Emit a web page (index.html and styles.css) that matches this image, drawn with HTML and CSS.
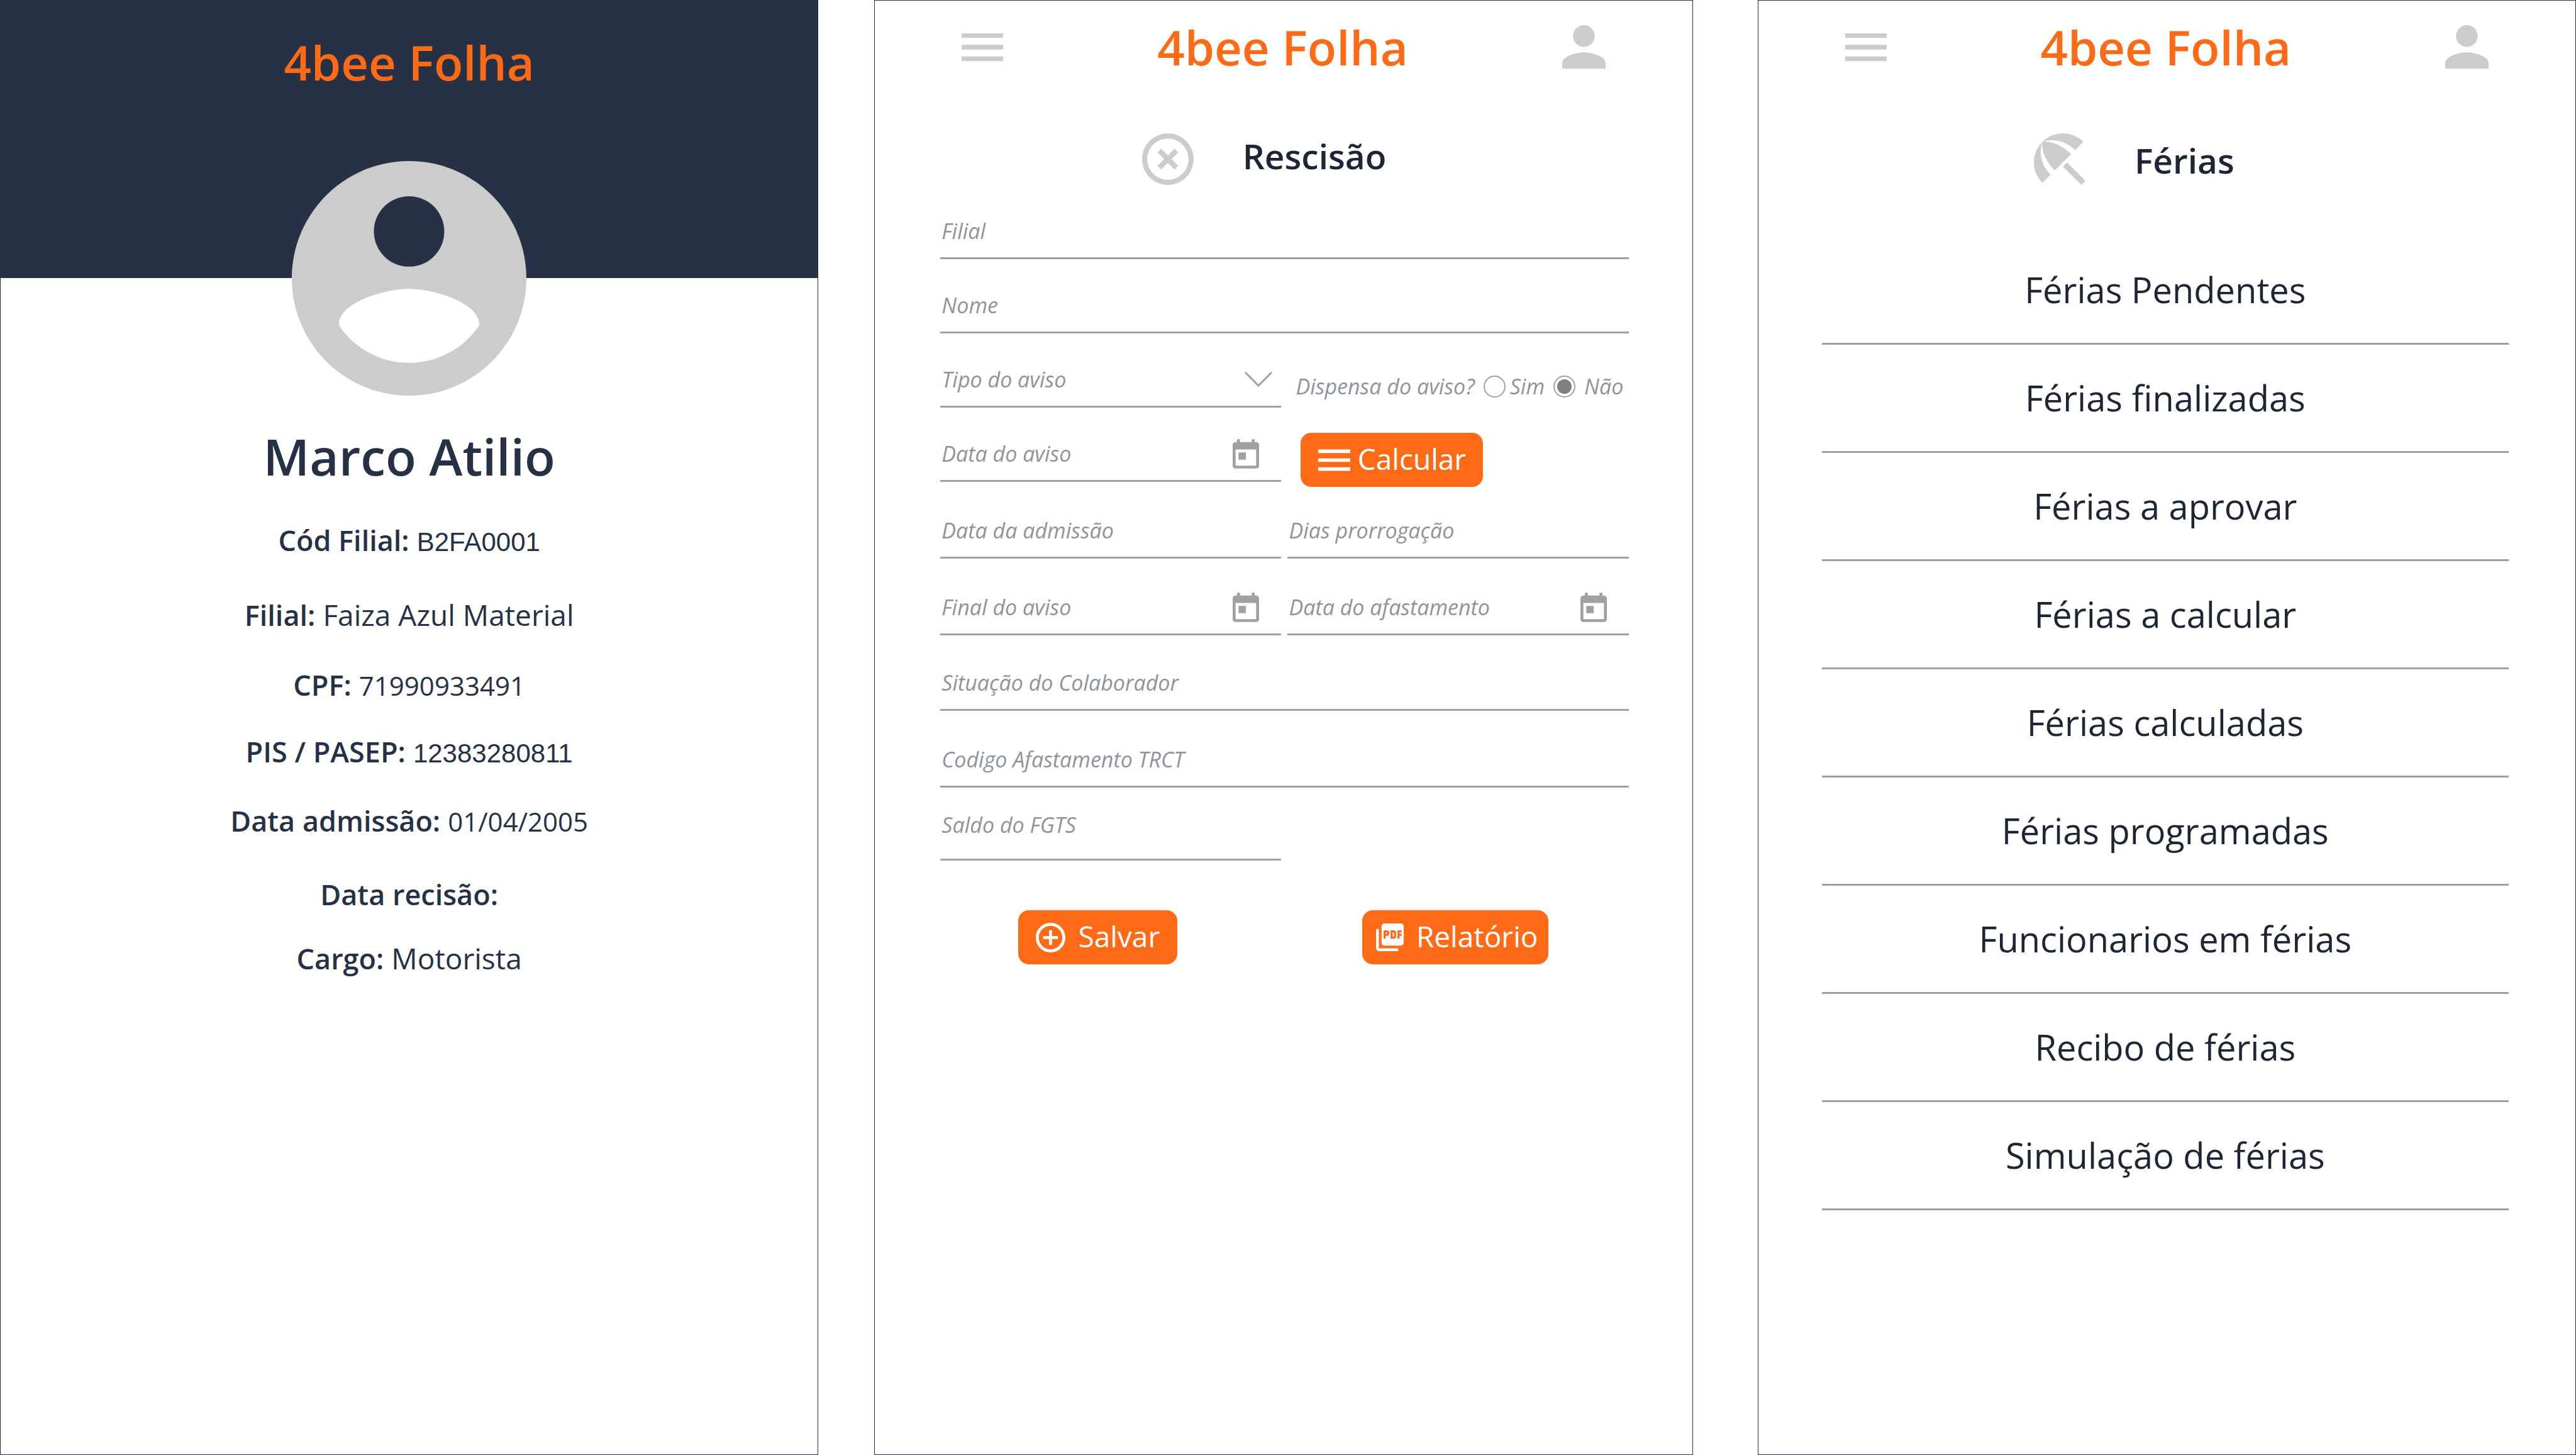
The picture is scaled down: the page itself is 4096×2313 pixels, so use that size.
FILE: index.html
```html
<!DOCTYPE html>
<html lang="pt-BR">
<head>
<meta charset="utf-8">
<meta name="viewport" content="width=device-width, initial-scale=1">
<title>4bee Folha</title>
<link rel="stylesheet" href="styles.css">
</head>
<body>
<svg class="sprite" aria-hidden="true">
  <symbol id="i-menu" viewBox="3 6 18 12"><path d="M3 18h18v-2H3v2zm0-5h18v-2H3v2zm0-7v2h18V6H3z"/></symbol>
  <symbol id="i-person" viewBox="4 4 16 16"><path d="M12 12c2.21 0 4-1.79 4-4s-1.79-4-4-4-4 1.79-4 4 1.79 4 4 4zm0 2c-2.67 0-8 1.34-8 4v2h16v-2c0-2.66-5.33-4-8-4z"/></symbol>
  <symbol id="i-today" viewBox="3 1 18 20"><path d="M19 3h-1V1h-2v2H8V1H6v2H5c-1.11 0-1.99.9-1.99 2L3 19c0 1.1.89 2 2 2h14c1.1 0 2-.9 2-2V5c0-1.1-.9-2-2-2zm0 16H5V8h14v11zM7 10h5v5H7z"/></symbol>
</svg>

<main class="screens">
  <section class="screen profile">
    <header class="profile-banner"><h1 class="brand">4bee Folha</h1></header>
    <svg class="avatar" viewBox="2 2 20 20" aria-hidden="true"><path d="M12 2C6.48 2 2 6.48 2 12s4.48 10 10 10 10-4.48 10-10S17.52 2 12 2zm0 3c1.66 0 3 1.34 3 3s-1.34 3-3 3-3-1.34-3-3 1.34-3 3-3zm0 14.2c-2.5 0-4.71-1.28-6-3.22.03-1.99 4-3.08 6-3.08 1.99 0 5.97 1.09 6 3.08-1.29 1.94-3.5 3.22-6 3.22z"/></svg>
    <h2 class="person-name">Marco Atilio</h2>
    <dl class="details">
      <div class="detail"><dt>Cód Filial:</dt><dd class="plain">B2FA0001</dd></div>
      <div class="detail"><dt>Filial:</dt><dd>Faiza Azul Material</dd></div>
      <div class="detail"><dt>CPF:</dt><dd class="number">71990933491</dd></div>
      <div class="detail"><dt>PIS / PASEP:</dt><dd class="plain">12383280811</dd></div>
      <div class="detail"><dt>Data admissão:</dt><dd class="number">01/04/2005</dd></div>
      <div class="detail"><dt>Data recisão:</dt></div>
      <div class="detail"><dt>Cargo:</dt><dd>Motorista</dd></div>
    </dl>
  </section>

  <section class="screen termination">
    <header class="topbar">
      <button class="icon-button" type="button" aria-label="Menu"><svg class="icon-menu"><use href="#i-menu"/></svg></button>
      <h1 class="brand">4bee Folha</h1>
      <button class="icon-button" type="button" aria-label="Perfil"><svg class="icon-person"><use href="#i-person"/></svg></button>
    </header>
    <div class="heading heading-termination">
      <svg class="heading-icon" viewBox="2 2 20 20" aria-hidden="true"><path d="M14.59 8L12 10.59 9.41 8 8 9.41 10.59 12 8 14.59 9.41 16 12 13.41 14.59 16 16 14.59 13.41 12 16 9.41 14.59 8zM12 2C6.47 2 2 6.47 2 12s4.47 10 10 10 10-4.47 10-10S17.53 2 12 2zm0 18c-4.41 0-8-3.59-8-8s3.59-8 8-8 8 3.59 8 8-3.59 8-8 8z"/></svg>
      <h2>Rescisão</h2>
    </div>
    <form class="form">
      <div class="fields">
        <div class="field wide"><input type="text" placeholder="Filial" aria-label="Filial"></div>
        <div class="field wide"><input type="text" placeholder="Nome" aria-label="Nome"></div>
        <div class="field">
          <select aria-label="Tipo do aviso"><option>Tipo do aviso</option></select>
          <svg class="chevron" viewBox="0 0 44 24" aria-hidden="true"><path d="M1 1l21 21L43 1"/></svg>
        </div>
        <div class="waiver" role="radiogroup" aria-labelledby="waiver-label">
          <span id="waiver-label">Dispensa do aviso?</span>
          <label class="choice"><input type="radio" name="dispensa">Sim</label>
          <label class="choice choice-no"><input type="radio" name="dispensa" checked>Não</label>
        </div>
        <div class="field">
          <input type="text" placeholder="Data do aviso" aria-label="Data do aviso">
          <button class="date-button" type="button" aria-label="Escolher data do aviso"><svg><use href="#i-today"/></svg></button>
        </div>
        <button class="button calculate" type="button"><svg class="calculate-icon"><use href="#i-menu"/></svg><span>Calcular</span></button>
        <div class="field"><input type="text" placeholder="Data da admissão" aria-label="Data da admissão"></div>
        <div class="field"><input type="text" placeholder="Dias prorrogação" aria-label="Dias prorrogação"></div>
        <div class="field">
          <input type="text" placeholder="Final do aviso" aria-label="Final do aviso">
          <button class="date-button" type="button" aria-label="Escolher final do aviso"><svg><use href="#i-today"/></svg></button>
        </div>
        <div class="field">
          <input type="text" placeholder="Data do afastamento" aria-label="Data do afastamento">
          <button class="date-button" type="button" aria-label="Escolher data do afastamento"><svg><use href="#i-today"/></svg></button>
        </div>
        <div class="field wide"><input type="text" placeholder="Situação do Colaborador" aria-label="Situação do Colaborador"></div>
        <div class="field wide"><input type="text" placeholder="Codigo Afastamento TRCT" aria-label="Codigo Afastamento TRCT"></div>
        <div class="field raised"><input type="text" placeholder="Saldo do FGTS" aria-label="Saldo do FGTS"></div>
      </div>
      <div class="actions">
        <button class="button save" type="submit"><svg class="save-icon" viewBox="2 2 20 20"><path d="M13 7h-2v4H7v2h4v4h2v-4h4v-2h-4V7zm-1-5C6.48 2 2 6.48 2 12s4.48 10 10 10 10-4.48 10-10S17.52 2 12 2zm0 18c-4.41 0-8-3.59-8-8s3.59-8 8-8 8 3.59 8 8-3.59 8-8 8z"/></svg><span>Salvar</span></button>
        <button class="button report" type="button"><svg class="report-icon" viewBox="2 2 20 20"><path d="M20 2H8c-1.1 0-2 .9-2 2v12c0 1.1.9 2 2 2h12c1.1 0 2-.9 2-2V4c0-1.1-.9-2-2-2zm-8.500 7.500c0 .83-.67 1.500-1.500 1.500H9v2H7.500V7H10c.83 0 1.500.67 1.500 1.500v1zm5 2c0 .83-.67 1.500-1.500 1.500h-2.500V7H15c.83 0 1.500.67 1.500 1.500v3zm4-3H19v1h1.500V11H19v2h-1.500V7h3v1.500zM9 9.500h1v-1H9v1zM4 6H2v14c0 1.100.9 2 2 2h14v-2H4V6zm10 5.500h1v-3h-1v3z"/></svg><span>Relatório</span></button>
      </div>
    </form>
  </section>

  <section class="screen vacation">
    <header class="topbar">
      <button class="icon-button" type="button" aria-label="Menu"><svg class="icon-menu"><use href="#i-menu"/></svg></button>
      <h1 class="brand">4bee Folha</h1>
      <button class="icon-button" type="button" aria-label="Perfil"><svg class="icon-person"><use href="#i-person"/></svg></button>
    </header>
    <div class="heading heading-vacation">
      <svg class="heading-icon" viewBox="3 3 18 18" aria-hidden="true"><path d="M13.127 14.56l1.43-1.43 6.44 6.443L19.57 21zm4.293-5.73l2.86-2.860c-3.950-3.950-10.350-3.960-14.300-.02 3.930-1.300 8.310-.25 11.440 2.880zM5.950 5.980c-3.940 3.950-3.930 10.350.02 14.300l2.860-2.860C5.700 14.290 4.650 9.910 5.950 5.980zm.02-.02l-.01.01c-.38 3.010 1.170 6.880 4.300 10.020l5.730-5.730c-3.130-3.130-7.010-4.680-10.020-4.300z"/></svg>
      <h2>Férias</h2>
    </div>
    <nav class="options">
      <a href="#pendentes">Férias Pendentes</a>
      <a href="#finalizadas">Férias finalizadas</a>
      <a href="#aprovar">Férias a aprovar</a>
      <a href="#calcular">Férias a calcular</a>
      <a href="#calculadas">Férias calculadas</a>
      <a href="#programadas">Férias programadas</a>
      <a href="#funcionarios">Funcionarios em férias</a>
      <a href="#recibo">Recibo de férias</a>
      <a href="#simulacao">Simulação de férias</a>
    </nav>
  </section>
</main>
</body>
</html>
```
FILE: styles.css
```css
:root {
  --navy: #273145;
  --ink: #1e2535;
  --orange: #ff6a16;
  --light: #cccccc;
  --rule: #a0a0a0;
  --hint: #8e939c;
}

* { box-sizing: border-box; }

body {
  margin: 0;
  background: #fff;
  color: var(--ink);
  font-family: "Open Sans", "Noto Sans", sans-serif;
}

h1, h2, dl, dd { margin: 0; }
svg { display: block; fill: currentColor; }
button { border: 0; padding: 0; background: none; font: inherit; cursor: pointer; }

.sprite { position: absolute; width: 0; height: 0; }

.screens { display: flex; min-height: 100vh; }
.screen { flex: 1; min-width: 0; border: 1px solid var(--navy); }
.termination { margin-left: 89px; }
.vacation { margin-left: 103px; }

.brand { color: var(--orange); font-size: 76px; font-weight: 600; line-height: 106px; }

/* Profile */
.profile { display: flex; flex-direction: column; align-items: center; color: var(--navy); }
.profile-banner { align-self: stretch; height: 441px; padding-top: 45px; background: var(--navy); text-align: center; }
.avatar { width: 373px; height: 373px; margin-top: -186px; color: var(--light); }
.person-name { margin-top: 43px; font-size: 80px; font-weight: 600; line-height: 106px; }
.details {
  display: grid;
  grid-template-rows: 114px 116px 112px 108px 108px 116px 102px;
  align-items: end;
  font-size: 46px;
  line-height: 60px;
}
.detail { display: flex; justify-content: center; align-items: baseline; gap: 12px; }
.detail dt { font-size: 45px; font-weight: 600; }
.plain { font-family: "Liberation Sans", Arial, sans-serif; font-size: 42px; }
.number { font-size: 42px; }

/* Shared header */
.topbar { display: flex; align-items: center; justify-content: space-between; height: 147px; padding: 0 138px; }
.icon-button { color: var(--light); }
.icon-menu { width: 66px; height: 44px; }
.icon-person { width: 69px; height: 69px; }

.heading { display: flex; align-items: center; justify-content: center; gap: 78px; height: 110px; margin-top: 50px; }
.heading h2 { font-size: 55px; font-weight: 600; line-height: 74px; }
.heading-icon { width: 82px; height: 82px; color: var(--light); }
.heading-termination { padding-right: 62px; }
.heading-termination h2 { padding-bottom: 10px; }
.heading-vacation { padding-right: 104px; }
.heading-vacation h2 { padding-top: 4px; }

/* Termination form */
.form { padding: 0 101px 0 104px; }
.fields {
  display: grid;
  grid-template-columns: 1fr 1fr;
  grid-template-rows: 104px 118px 118px 118px 122px 122px 120px 122px 116px;
  column-gap: 10px;
  align-items: end;
  color: var(--hint);
  font-size: 34px;
  font-style: italic;
}
.wide { grid-column: 1 / -1; }
.field { display: flex; align-items: center; height: 88px; border-bottom: 3px solid var(--rule); }
.field input, .field select {
  flex: 1;
  min-width: 0;
  height: 85px;
  margin: 0;
  padding: 0 2px;
  border: 0;
  background: none;
  color: inherit;
  font: inherit;
  appearance: none;
}
.field input::placeholder { color: inherit; opacity: 1; }
.raised input { padding-bottom: 24px; }
.chevron { width: 44px; height: 24px; margin-right: 14px; fill: none; stroke: var(--rule); stroke-width: 3; }
.date-button { margin: 2px 35px 0 0; color: var(--rule); }
.date-button svg { width: 42px; height: 47px; }

.waiver { display: flex; align-items: center; height: 68px; padding-left: 13px; white-space: nowrap; }
.choice { display: flex; align-items: center; gap: 7px; margin-left: 14px; }
.choice-no { gap: 14px; }
.choice input {
  width: 35px;
  height: 35px;
  margin: 0;
  border: 2px solid var(--rule);
  border-radius: 50%;
  appearance: none;
}
.choice input:checked { padding: 4px; background: #808080 content-box; }

.button {
  display: flex;
  align-items: center;
  justify-content: center;
  height: 86px;
  border-radius: 17px;
  background: var(--orange);
  color: #fff;
  font-size: 46px;
  font-style: normal;
}
.button span { padding-bottom: 4px; }
.calculate { align-self: start; gap: 12px; width: 290px; margin: 40px 0 0 21px; }
.calculate-icon { width: 51px; height: 35px; }
.actions { display: flex; justify-content: space-between; margin-top: 79px; padding: 0 128px 0 124px; }
.save { gap: 20px; width: 253px; }
.save-icon { width: 47px; height: 47px; }
.report { gap: 20px; width: 296px; padding-left: 6px; }
.report-icon { width: 44px; height: 44px; }

/* Vacation list */
.options { display: flex; flex-direction: column; margin-top: 68px; padding: 0 106px 0 101px; }
.options a {
  border-bottom: 3px solid var(--rule);
  color: var(--ink);
  font-size: 56px;
  line-height: 169px;
  text-align: center;
  text-decoration: none;
}
```
